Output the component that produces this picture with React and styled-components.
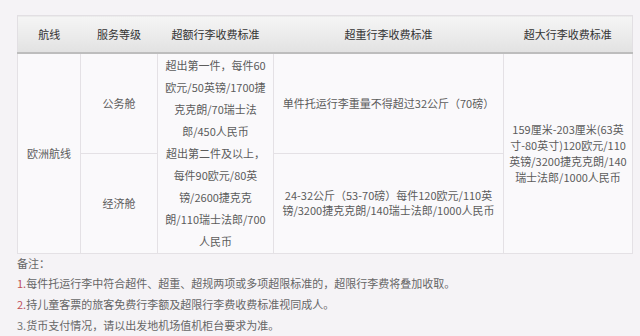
import React from "react";
import styled, { createGlobalStyle } from "styled-components";

const GlobalStyle = createGlobalStyle`
  body {
    margin: 0;
    background: #f5f3f6;
    font-family: "Noto Sans CJK SC", "Noto Sans", sans-serif;
  }
`

const Wrapper = styled.div`
  padding: 15px 8px 0 17px;
`

const Table = styled.table`
  width: 615px;
  table-layout: fixed;
  border-collapse: collapse;
  background: #faf9fb;
  border: 1px solid #e2dfe3;
`

const Th = styled.th`
  height: 36px;
  padding: 0;
  background: linear-gradient(#f5f5f5, #e2e2e2);
  border-bottom: 2px solid #bdbdbd;
  font-size: 11px;
  font-weight: normal;
  color: #333;
  text-align: center;
`

const Row = styled.tr`
  height: 100px;
`

const Td = styled.td`
  padding: 0;
  border: 1px solid #e4e1e5;
  text-align: center;
  vertical-align: middle;
  font-size: 11px;
  color: #5c5c5c;
  line-height: ${props => props.lh || 16}px;
`

const Line = styled.div`
  white-space: nowrap;
`

const Notes = styled.div`
  font-size: 11px;
  color: #666;
`

const NoteTitle = styled.div`
  line-height: 19px;
`

const NoteItem = styled.div`
  line-height: 21px;
`

const Num = styled.span`
  color: ${props => props.color};
`

const excessLines = [
  "超出第一件，每件60",
  "欧元/50英镑/1700捷",
  "克克朗/70瑞士法",
  "郎/450人民币",
  "超出第二件及以上，",
  "每件90欧元/80英",
  "镑/2600捷克克",
  "朗/110瑞士法郎/700",
  "人民币",
];

const oversizeLines = [
  "159厘米-203厘米(63英",
  "寸-80英寸)120欧元/110",
  "英镑/3200捷克克朗/140",
  "瑞士法郎/1000人民币",
];

const notes = [
  { n: "1.", color: "#c0505a", text: "每件托运行李中符合超件、超重、超规两项或多项超限标准的，超限行李费将叠加收取。" },
  { n: "2.", color: "#c0505a", text: "持儿童客票的旅客免费行李额及超限行李费收费标准视同成人。" },
  { n: "3.", color: "#777", text: "货币支付情况，请以出发地机场值机柜台要求为准。" },
];

function App() {
  return (
    <Wrapper>
      <GlobalStyle />
      <Table>
        <colgroup>
          <col style={{ width: 63 }} />
          <col style={{ width: 77 }} />
          <col style={{ width: 116 }} />
          <col style={{ width: 230 }} />
          <col style={{ width: 129 }} />
        </colgroup>
        <thead>
          <tr>
            <Th>航线</Th>
            <Th>服务等级</Th>
            <Th>超额行李收费标准</Th>
            <Th>超重行李收费标准</Th>
            <Th>超大行李收费标准</Th>
          </tr>
        </thead>
        <tbody>
          <Row>
            <Td rowSpan={2}>欧洲航线</Td>
            <Td>公务舱</Td>
            <Td rowSpan={2} lh={22}>
              {excessLines.map((l) => <Line key={l}>{l}</Line>)}
            </Td>
            <Td>单件托运行李重量不得超过32公斤（70磅）</Td>
            <Td rowSpan={2}>
              {oversizeLines.map((l) => <Line key={l}>{l}</Line>)}
            </Td>
          </Row>
          <Row>
            <Td>经济舱</Td>
            <Td lh={15}>
              <Line>24-32公斤（53-70磅）每件120欧元/110英</Line>
              <Line>镑/3200捷克克朗/140瑞士法郎/1000人民币</Line>
            </Td>
          </Row>
        </tbody>
      </Table>
      <Notes>
        <NoteTitle>备注：</NoteTitle>
        {notes.map((item) => (
          <NoteItem key={item.n}>
            <Num color={item.color}>{item.n}</Num>{item.text}
          </NoteItem>
        ))}
      </Notes>
    </Wrapper>
  );
}

export default App
